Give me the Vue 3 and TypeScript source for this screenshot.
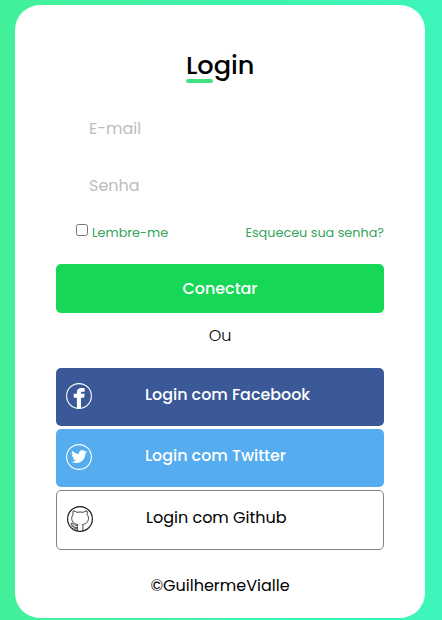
<script setup lang="ts">
import { ref } from 'vue'

const email = ref('')
const password = ref('')
const remember = ref(false)
</script>

<template>
  <main class="page">
    <form class="card" @submit.prevent>
      <h1 class="title"><span class="title-text">Login</span></h1>
      <input v-model="email" class="field" type="email" placeholder="E-mail" />
      <input v-model="password" class="field senha" type="password" placeholder="Senha" />
      <div class="options">
        <label class="remember">
          <input v-model="remember" class="check" type="checkbox" />
          <span class="remember-text">Lembre-me</span>
        </label>
        <a class="forgot">Esqueceu sua senha?</a>
      </div>
      <button class="submit" type="submit"><span>Conectar</span></button>
      <p class="or"><span>Ou</span></p>
      <div class="socials">
        <a class="social facebook">
          <svg class="icon" viewBox="0 0 26 26">
            <circle cx="13" cy="13" r="12.4" fill="none" stroke="#fff" stroke-width="1.1" />
            <path fill="#fff" d="M10.9 25.6V14.8H7.7v-4h3.2V9.3c0-2.9 1.8-4.2 4.6-4.2 1.3 0 2.5.1 3.2.3v3.4h-2c-1.3 0-1.7.5-1.7 1.4v.6h3.7l-.6 4H15v10.8z" />
          </svg>
          <span class="label">Login com Facebook</span>
        </a>
        <a class="social twitter">
          <svg class="icon" viewBox="0 0 26 26">
            <circle cx="13" cy="13" r="12.4" fill="none" stroke="#fff" stroke-width="1.1" />
            <path fill="#fff" transform="translate(5.2 4.7) scale(.66)" d="M23.95 4.57a10 10 0 0 1-2.82.77 4.96 4.96 0 0 0 2.16-2.72 9.9 9.9 0 0 1-3.12 1.19 4.92 4.92 0 0 0-8.39 4.48A13.98 13.98 0 0 1 1.64 3.16a4.92 4.92 0 0 0 1.52 6.57 4.9 4.9 0 0 1-2.23-.61v.06a4.93 4.93 0 0 0 3.95 4.83 5 5 0 0 1-2.21.08 4.94 4.94 0 0 0 4.6 3.42A9.87 9.87 0 0 1 0 19.54a13.9 13.9 0 0 0 7.55 2.21c9.06 0 14-7.5 14-13.98 0-.21 0-.42-.02-.63a9.94 9.94 0 0 0 2.42-2.57z" />
          </svg>
          <span class="label">Login com Twitter</span>
        </a>
        <a class="social github">
          <svg class="icon" viewBox="0 0 26 26" fill="none" stroke="#222">
            <circle cx="13" cy="13" r="12.4" stroke-width="1.2" />
            <path stroke-width=".85" d="M10.3 25v-4.4c0-.9.2-1.6.6-2.1-3.4-.5-6.2-2.2-6.2-6.3 0-1.5.5-2.7 1.4-3.7-.4-1.1-.3-2.3.1-3.6 1.5.1 2.6.6 3.7 1.4 2.1-.4 4.3-.4 6.4 0 1.1-.8 2.2-1.3 3.7-1.4.4 1.3.5 2.5.1 3.6.9 1 1.4 2.2 1.4 3.7 0 4.1-2.8 5.8-6.2 6.3.4.5.6 1.2.6 2.1V25" />
            <path stroke-width=".8" d="M10.3 21.4c-2.5.6-3.5-.5-4.2-1.7-.5-.9-1-1.5-2.4-1.7M10.3 19.5c-2 .3-2.7-.5-3.3-1.2-.6-.8-1.7-1.1-3.3-1M4.2 19.3c1.8.4 2.3 3.7 6.1 3.7" />
          </svg>
          <span class="label">Login com Github</span>
        </a>
      </div>
      <footer class="credit"><span>©GuilhermeVialle</span></footer>
    </form>
  </main>
</template>

<style>
body {
  margin: 0;
}
</style>

<style scoped>
.page {
  box-sizing: border-box;
  height: 620px;
  padding: 5px 17px 2px 15px;
  overflow: hidden;
  background: linear-gradient(to right, #43f09a, #3df5bb);
  font-family: Poppins, Inter, sans-serif;
  font-size: 16px;
  color: #000;
}
.card {
  box-sizing: border-box;
  height: 613px;
  padding: 41px 41px 0;
  border-radius: 25px;
  background: #fff;
}
.title {
  display: flex;
  flex-direction: column;
  width: 68px;
  height: 38px;
  margin: 0 0 0 130px;
  font-size: 25.6px;
  font-weight: 500;
  line-height: 39px;
  white-space: nowrap;
}
.title-text {
  height: 33px;
}
.title::after {
  content: '';
  flex: none;
  width: 27px;
  height: 4px;
  border-radius: 4px;
  background: #43e080;
}
.field {
  display: block;
  box-sizing: border-box;
  width: 290px;
  height: 40px;
  margin: 24px 0 0 33px;
  padding: 0;
  border: 0;
  outline: 0;
  background: transparent;
  font: inherit;
}
.field::placeholder {
  color: #bcbcbc;
  font-weight: 400;
}
.senha {
  margin-top: 17px;
}
.options {
  display: flex;
  justify-content: space-between;
  height: 20px;
  margin-top: 17px;
  padding-left: 20px;
  font-size: 12.8px;
  line-height: 22px;
  color: #35a35b;
}
.remember {
  display: flex;
}
.check {
  flex: none;
  width: 12px;
  height: 12px;
  margin: 2px 4px 0 0;
}
.submit {
  display: block;
  width: 328px;
  height: 49px;
  margin-top: 22px;
  padding: 0;
  border: 0;
  border-radius: 5px;
  background: #16d856;
  color: #fff;
  font: inherit;
  font-weight: 500;
  font-size: 15.9px;
}
.or {
  height: 24px;
  margin: 11px 0 20px;
  font-weight: 300;
  line-height: 24px;
  text-align: center;
}
.socials {
  display: flex;
  flex-direction: column;
  gap: 3px;
}
.social {
  display: flex;
  box-sizing: border-box;
  height: 58px;
  padding: 15px 10px 0;
  border-radius: 5px;
  color: #fff;
  font-size: 15.9px;
  font-weight: 500;
}
.facebook {
  background: #3b5998;
}
.twitter {
  background: #55acee;
}
.github {
  height: 60px;
  border: 1px solid #808080;
  color: #000;
  font-size: 16px;
  font-weight: 400;
}
.icon {
  flex: none;
  width: 26px;
  height: 26px;
}
.label {
  margin-left: 53px;
  line-height: 24px;
  white-space: nowrap;
}
.credit {
  margin-top: 24px;
  line-height: 24px;
  text-align: center;
}
</style>
